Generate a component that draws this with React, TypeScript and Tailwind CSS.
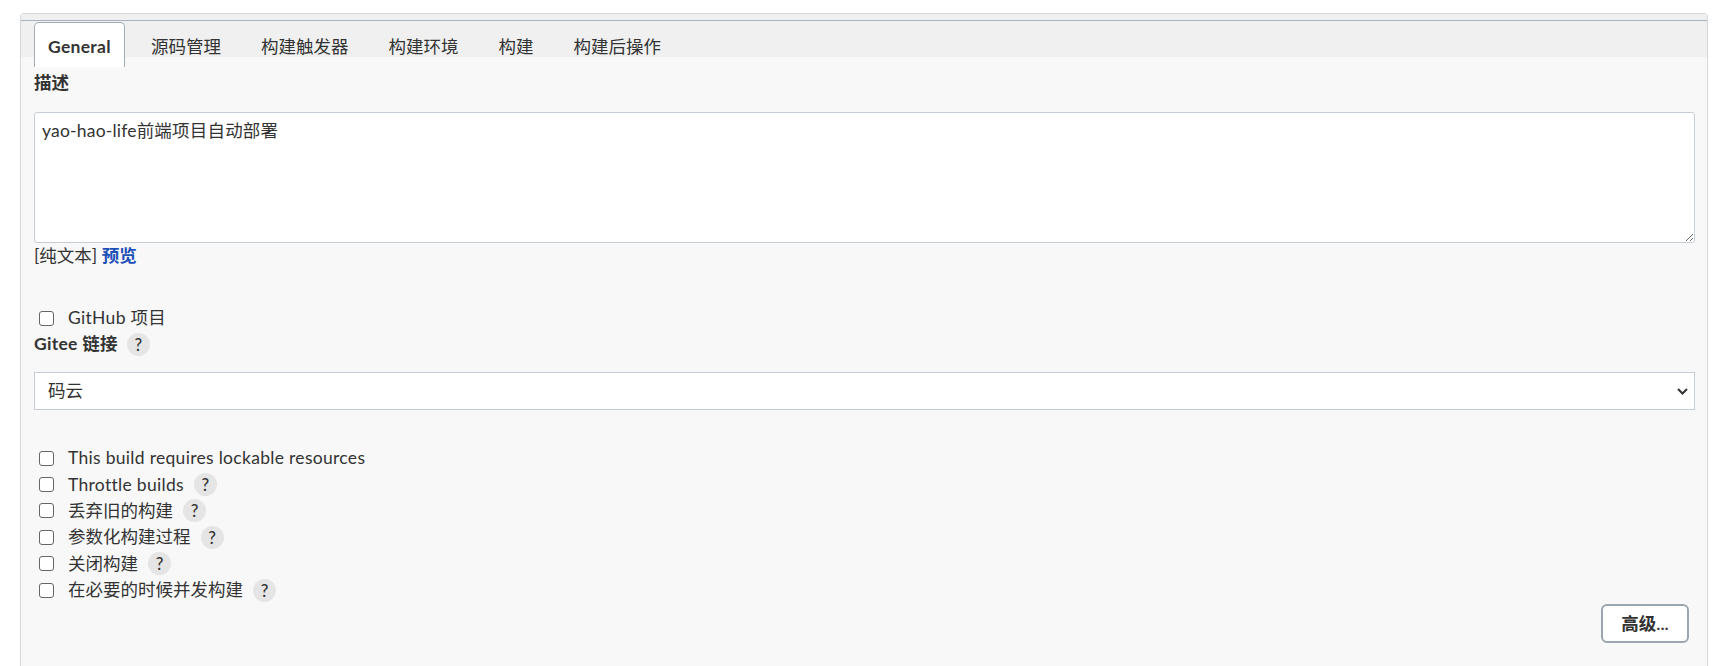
import React from "react";

const tabs = ["General", "源码管理", "构建触发器", "构建环境", "构建", "构建后操作"];

const options = [
  { label: "This build requires lockable resources", help: false },
  { label: "Throttle builds", help: true },
  { label: "丢弃旧的构建", help: true },
  { label: "参数化构建过程", help: true },
  { label: "关闭构建", help: true },
  { label: "在必要的时候并发构建", help: true },
];

// latin labels get a touch of tracking, CJK ones stay tight
const isLatin = (s: string) => /^[\x20-\x7e]+$/.test(s);

const HelpIcon: React.FC<{ className?: string }> = ({ className = "ml-[10px]" }) => (
  <span
    className={`${className} inline-flex h-[23px] w-[23px] items-center justify-center rounded-full bg-[#e5e5e5] text-[17px] font-medium leading-none text-[#333]`}
  >
    ?
  </span>
);

const Checkbox: React.FC = () => (
  <input
    type="checkbox"
    className="ml-[5px] mr-[14px] h-[15px] w-[15px] shrink-0 appearance-none rounded-[3px] border border-[#666] bg-white"
  />
);

const App: React.FC = () => {
  return (
    <div className="min-h-[666px] bg-white font-['Segoe_UI','Lato','Noto_Sans_CJK_SC',sans-serif] text-[17.5px] leading-[26px] text-[#333]">
      <div className="ml-[20px] mt-[13px] flex h-[653px] w-[1688px] flex-col rounded-t-[4px] border border-b-0 border-[#d3d8dd] bg-[#f8f8f8]">
        {/* tab strip */}
        <div className="bg-[#f0f0f0] pt-[6px]">
          <div className="flex h-[37px] items-start gap-[12px] border-t border-[#a9b3bd] pl-[13px] pt-px">
            {tabs.map((tab, i) =>
              i === 0 ? (
                <div
                  key={tab}
                  className="relative z-10 h-[45px] shrink-0 rounded-t-[5px] border border-b-0 border-[#a3abb3] bg-white px-[13px] pt-[11px] font-bold tracking-[0.3px]"
                >
                  {tab}
                </div>
              ) : (
                <div key={tab} className="shrink-0 px-[14px] pt-[12px]">
                  {tab}
                </div>
              )
            )}
          </div>
        </div>

        {/* form body */}
        <div className="flex flex-col pl-[13px] pr-[12px] pt-[13px]">
          <div className="font-bold">描述</div>
          <textarea
            className="mt-[16px] h-[131px] w-full rounded-[3px] border border-[#c6cdd4] bg-white px-[7px] py-[5px] text-[17.5px] leading-[26px] tracking-[0.2px] text-[#333] outline-none"
            defaultValue="yao-hao-life前端项目自动部署"
          />
          <div>
            [纯文本] <span className="font-bold text-[#1d4fb8]">预览</span>
          </div>

          <label className="mt-[36px] flex h-[26px] items-center tracking-[0.3px]">
            <Checkbox />
            GitHub 项目
          </label>
          <div className="flex h-[26px] items-center font-bold tracking-[0.3px]">
            Gitee 链接
            <HelpIcon className="ml-[9px]" />
          </div>

          <div className="mt-[15px] flex h-[38px] w-full items-center justify-between border border-[#c6cdd4] bg-white pl-[13px] pr-[6px]">
            <span>码云</span>
            <svg width="11" height="7" viewBox="0 0 11 7" fill="none">
              <polyline points="1,1 5.5,5.5 10,1" stroke="#333" strokeWidth="2" />
            </svg>
          </div>

          <div className="mt-[35px] flex flex-col">
            {options.map((opt) => (
              <label
                key={opt.label}
                className={
                  isLatin(opt.label)
                    ? "flex h-[26.4px] items-center tracking-[0.3px]"
                    : "flex h-[26.4px] items-center"
                }
              >
                <Checkbox />
                {opt.label}
                {opt.help && <HelpIcon />}
              </label>
            ))}
          </div>

          <button className="mr-[6px] mt-px h-[39px] w-[88px] self-end rounded-[6px] border-2 border-[#9ba6b1] bg-white font-semibold text-[#333]">
            高级...
          </button>
        </div>
      </div>
    </div>
  );
};

export default App;
